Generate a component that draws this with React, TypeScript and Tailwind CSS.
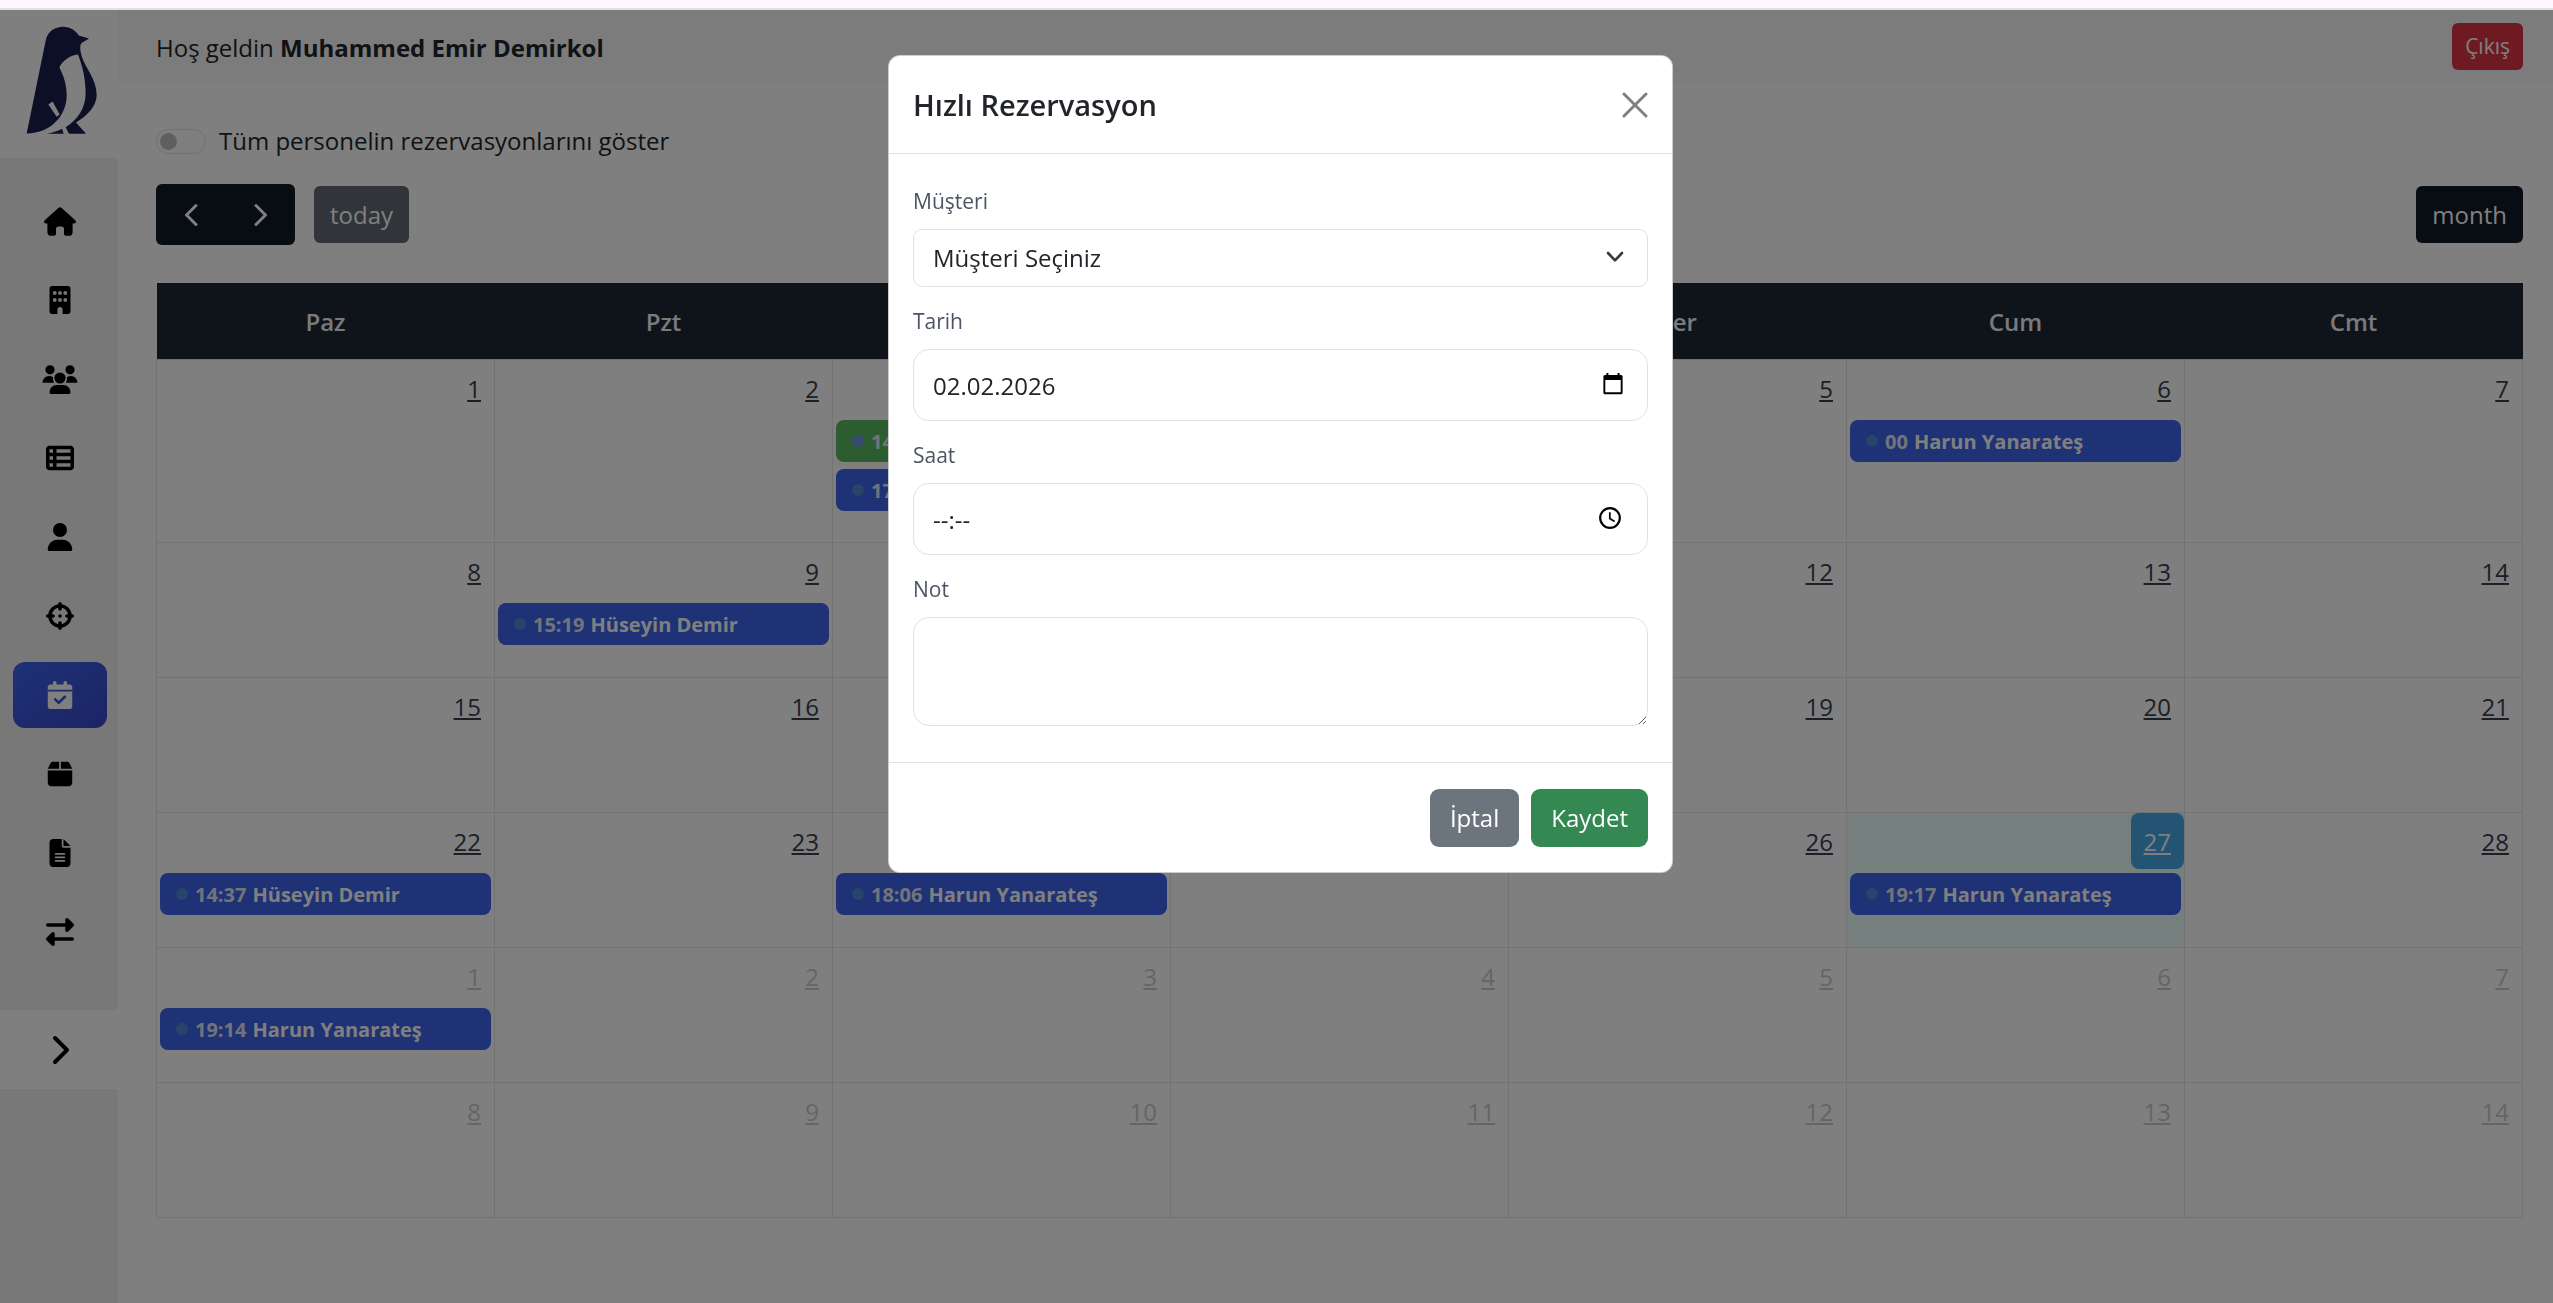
import { useState } from "react";
import type { ReactNode } from "react";
import clsx from "clsx";
import {
  FaBox,
  FaBuilding,
  FaCalendarCheck,
  FaChevronRight,
  FaCrosshairs,
  FaFileLines,
  FaRightLeft,
  FaTableList,
  FaUser,
} from "react-icons/fa6";

type CalendarEvent = {
  time: string;
  title: string;
  color?: "blue" | "green";
};

type Day = {
  day: number;
  other?: boolean;
  today?: boolean;
  events?: CalendarEvent[];
};

const weekDays = ["Paz", "Pzt", "Sal", "Çar", "Per", "Cum", "Cmt"];

const events: Record<string, CalendarEvent[]> = {
  "0-2": [
    { time: "14:30", title: "Hüseyin Demir", color: "green" },
    { time: "17:00", title: "Harun Yanarateş" },
  ],
  "0-5": [{ time: "00", title: "Harun Yanarateş" }],
  "1-1": [{ time: "15:19", title: "Hüseyin Demir" }],
  "3-0": [{ time: "14:37", title: "Hüseyin Demir" }],
  "3-2": [{ time: "18:06", title: "Harun Yanarateş" }],
  "3-5": [{ time: "19:17", title: "Harun Yanarateş" }],
  "4-0": [{ time: "19:14", title: "Harun Yanarateş" }],
};

const weeks: Day[][] = Array.from({ length: 6 }, (_, w) =>
  Array.from({ length: 7 }, (_, d) => {
    const n = w * 7 + d + 1;
    return {
      day: n > 28 ? n - 28 : n,
      other: n > 28,
      today: n === 27,
      events: events[`${w}-${d}`],
    };
  })
);

function Penguin() {
  return (
    <svg viewBox="78 84 216 326" className="h-[109px] w-[72px]" aria-hidden="true">
      <path
        fill="#1a1f4f"
        d="M80 406 L137 128 C142 100 164 86 189 86 C211 86 227 97 236 112 L267 121 L246 134 C239 140 240 152 243 165 C252 208 291 240 290 292 C289 325 262 352 228 373 L258 407 H207 L197 387 C232 365 257 330 257 285 C257 243 248 205 234 169 C210 172 190 185 178 207 C191 232 200 260 200 292 C200 350 155 405 80 406 Z"
      />
      <path fill="#1a1f4f" d="M141 407 C160 403 175 398 186 392 L191 407 Z" />
      <path fill="#ffffff" d="M145 319 L158 310 L179 349 L170 356 Z" />
    </svg>
  );
}

function HomeIcon() {
  return (
    <svg viewBox="0 0 32 29" className="h-[29px] w-8" fill="currentColor" aria-hidden="true">
      <path d="M14.6 .8 C15.4 0 16.6 0 17.4 .8 L31.3 13.2 C32.6 14.5 31.8 16.4 30.2 16.4 H28.6 V25.4 C28.6 27.4 27.1 28.8 25.1 28.8 H22 C20.9 28.8 20 28 20 26.8 V21.8 C20 20.4 18.9 19.4 17.6 19.4 H14.4 C13.1 19.4 12 20.4 12 21.8 V26.8 C12 28 11.1 28.8 10 28.8 H6.9 C4.9 28.8 3.4 27.4 3.4 25.4 V16.4 H1.8 C.2 16.4 -.6 14.5 .7 13.2 Z" />
    </svg>
  );
}

function UsersIcon() {
  return (
    <svg viewBox="0 0 36 29" className="h-[29px] w-9" fill="currentColor" aria-hidden="true">
      <circle cx="8" cy="4.8" r="4.6" />
      <circle cx="28" cy="4.8" r="4.6" />
      <path d="M.6 17.8 C.6 13.8 3.5 11 7.2 11 C8.6 11 10 11.4 11.1 12.2 C10.8 14.2 11.2 16.2 12.2 17.8 Z" />
      <path d="M35.4 17.8 C35.4 13.8 32.5 11 28.8 11 C27.4 11 26 11.4 24.9 12.2 C25.2 14.2 24.8 16.2 23.8 17.8 Z" />
      <circle cx="18" cy="13" r="5.6" />
      <path d="M7.5 27.6 C7.5 23.2 10.6 20 14.8 20 H21.2 C25.4 20 28.5 23.2 28.5 27.6 C28.5 28.4 28 29 27.2 29 H8.8 C8 29 7.5 28.4 7.5 27.6 Z" />
    </svg>
  );
}

function Chevron({ flip }: { flip?: boolean }) {
  return (
    <svg
      viewBox="0 0 14 24"
      className="h-6 w-[14px]"
      fill="none"
      stroke="currentColor"
      strokeWidth="3"
      strokeLinecap="round"
      strokeLinejoin="round"
      aria-hidden="true"
    >
      <path d={flip ? "M2 2.5 L11.5 12 L2 21.5" : "M12 2.5 L2.5 12 L12 21.5"} />
    </svg>
  );
}

const navItems: { label: string; icon: ReactNode; active?: boolean }[] = [
  { label: "Ana Sayfa", icon: <HomeIcon /> },
  { label: "Şirket", icon: <FaBuilding /> },
  { label: "Müşteriler", icon: <UsersIcon /> },
  { label: "Liste", icon: <FaTableList /> },
  { label: "Personel", icon: <FaUser /> },
  { label: "Hedefler", icon: <FaCrosshairs /> },
  { label: "Rezervasyonlar", icon: <FaCalendarCheck />, active: true },
  { label: "Ürünler", icon: <FaBox /> },
  { label: "Raporlar", icon: <FaFileLines /> },
  { label: "Transferler", icon: <FaRightLeft /> },
];

function Sidebar() {
  return (
    <aside className="flex w-[118px] shrink-0 flex-col bg-[#f1f1f1]">
      <a href="#" aria-label="Logo" className="flex h-[148px] items-center justify-center bg-white pb-2 pl-[6px]">
        <Penguin />
      </a>
      <nav className="pt-[30px] pr-[11px] pb-[45px] pl-[13px]">
        <ul className="flex flex-col gap-[13px]">
          {navItems.map((item) => (
            <li key={item.label}>
              <a
                href="#"
                aria-label={item.label}
                className={clsx(
                  "flex h-[66px] items-center justify-center rounded-xl text-[28px]",
                  item.active
                    ? "bg-linear-to-br from-[#3b65ea] to-[#3848cc] text-white"
                    : "text-black"
                )}
              >
                {item.icon}
              </a>
            </li>
          ))}
        </ul>
      </nav>
      <button
        type="button"
        aria-label="Menüyü aç"
        className="flex h-[79px] items-center justify-center bg-white text-[32px] text-black"
      >
        <FaChevronRight />
      </button>
    </aside>
  );
}

function Header() {
  return (
    <header className="flex h-[73px] items-center justify-between bg-[#f8f8f8] pr-[30px] pl-[38px]">
      <p className="pt-[2px]">
        Hoş geldin <strong className="font-bold">Muhammed Emir Demirkol</strong>
      </p>
      <button type="button" className="h-[47px] rounded-md bg-[#dc3545] px-[13px] text-[21px] text-white">
        Çıkış
      </button>
    </header>
  );
}

function EventPill({ event }: { event: CalendarEvent }) {
  return (
    <a
      href="#"
      className={clsx(
        "flex h-[42px] items-center overflow-hidden rounded-lg pl-4 text-[20px] font-bold whitespace-nowrap text-white",
        event.color === "green" ? "bg-[#5cb862]" : "bg-[#3c64ea]"
      )}
    >
      <span
        className={clsx(
          "mr-[7px] size-3 shrink-0 rounded-full",
          event.color === "green" ? "bg-[#6a94dc]" : "bg-[#4c88d8]"
        )}
      />
      <span className="mr-[6px] pt-[2px] text-[#e4e8f8]">{event.time}</span>
      <span className="pt-[2px]">{event.title}</span>
    </a>
  );
}

function DayCell({ day }: { day: Day }) {
  return (
    <td
      className={clsx(
        "h-[135px] border border-[#e6e6e6] p-0 align-top",
        day.today && "bg-[#ebfefa]"
      )}
    >
      <div className="flex h-[60px] items-start justify-end">
        <a
          href="#"
          className={clsx(
            "rounded-lg px-[13px] pt-[11px] pb-[9px] leading-9 font-medium underline decoration-2 underline-offset-2",
            day.today && "bg-[#48a8e8] text-white",
            day.other ? "text-[#c9cacc]" : !day.today && "text-[#374151]"
          )}
        >
          {day.day}
        </a>
      </div>
      {day.events && (
        <div className="flex flex-col gap-[7px] px-[3px] pb-[31px]">
          {day.events.map((event) => (
            <EventPill key={event.time} event={event} />
          ))}
        </div>
      )}
    </td>
  );
}

function Calendar() {
  return (
    <table className="mt-[38px] w-full table-fixed border-collapse">
      <thead>
        <tr>
          {weekDays.map((name) => (
            <th key={name} className="h-[76px] bg-[#1f2937] pt-[2px] font-semibold text-[#f3f4f6]">
              {name}
            </th>
          ))}
        </tr>
      </thead>
      <tbody>
        {weeks.map((week, i) => (
          <tr key={i}>
            {week.map((day) => (
              <DayCell key={day.day} day={day} />
            ))}
          </tr>
        ))}
      </tbody>
    </table>
  );
}

const fieldClass =
  "w-full rounded-2xl border border-[#dee2e6] bg-white px-[19px] text-[#212529] focus:outline-none";
const labelClass = "mb-3 block text-[21px] leading-8 text-[#4b5563]";

function ReservationModal({ onClose }: { onClose: () => void }) {
  const [date, setDate] = useState("02.02.2026");
  const [time, setTime] = useState("--:--");

  return (
    <div
      role="dialog"
      aria-modal="true"
      aria-labelledby="modal-title"
      className="w-[785px] rounded-xl border border-black/20 bg-white text-[#212529]"
    >
      <div className="flex h-[98px] items-center justify-between border-b border-[#dee2e6] px-6">
        <h5 id="modal-title" className="text-[29px] font-semibold">
          Hızlı Rezervasyon
        </h5>
        <button type="button" aria-label="Kapat" onClick={onClose} className="text-[#808080]">
          <svg viewBox="0 0 26 26" className="size-[26px]" stroke="currentColor" strokeWidth="3" strokeLinecap="round">
            <path d="M2 2 L24 24 M24 2 L2 24" />
          </svg>
        </button>
      </div>

      <div className="flex flex-col gap-[18px] px-6 pt-[31px] pb-9">
        <div>
          <label htmlFor="musteri" className={labelClass}>
            Müşteri
          </label>
          <div className="relative">
            <select
              id="musteri"
              className="h-[58px] w-full appearance-none rounded-[9px] border border-[#dee2e6] bg-white px-[19px] text-[#212529] focus:outline-none"
            >
              <option>Müşteri Seçiniz</option>
            </select>
            <svg
              viewBox="0 0 18 12"
              className="pointer-events-none absolute top-[22px] right-6 h-3 w-[18px]"
              fill="none"
              stroke="#343a40"
              strokeWidth="2.6"
              strokeLinecap="round"
              strokeLinejoin="round"
            >
              <path d="M2 2 L9 9.4 L16 2" />
            </svg>
          </div>
        </div>

        <div>
          <label htmlFor="tarih" className={labelClass}>
            Tarih
          </label>
          <div className="relative">
            <input
              id="tarih"
              type="text"
              value={date}
              onChange={(e) => setDate(e.target.value)}
              className={clsx(fieldClass, "h-[72px]")}
            />
            <svg viewBox="0 0 20 22" className="pointer-events-none absolute top-6 right-[25px] h-[22px] w-5">
              <path d="M3.4 0 H5.4 V3 H3.4 Z M14.6 0 H16.6 V3 H14.6 Z" />
              <path
                fillRule="evenodd"
                d="M2 2 H18 C19.1 2 19.6 2.9 19.6 4 V19.4 C19.6 20.5 19 21.2 18 21.2 H2 C1 21.2 .4 20.5 .4 19.4 V4 C.4 2.9 .9 2 2 2 Z M2.3 7 V19.3 H17.7 V7 Z"
              />
            </svg>
          </div>
        </div>

        <div>
          <label htmlFor="saat" className={labelClass}>
            Saat
          </label>
          <div className="relative">
            <input
              id="saat"
              type="text"
              value={time}
              onChange={(e) => setTime(e.target.value)}
              className={clsx(fieldClass, "h-[72px]")}
            />
            <svg
              viewBox="0 0 24 24"
              className="pointer-events-none absolute top-[23px] right-[26px] size-6"
              fill="none"
              stroke="#000000"
            >
              <circle cx="12" cy="12" r="9.8" strokeWidth="2.2" />
              <path d="M11.8 6.2 V12.6 L16.6 15.4" strokeWidth="1.7" />
            </svg>
          </div>
        </div>

        <div>
          <label htmlFor="not" className={labelClass}>
            Not
          </label>
          <textarea id="not" className={clsx(fieldClass, "block h-[109px] resize-y py-3")} />
        </div>
      </div>

      <div className="flex h-[110px] items-center justify-end gap-3 border-t border-[#dee2e6] px-6">
        <button
          type="button"
          onClick={onClose}
          className="h-[58px] rounded-[9px] bg-[#6c757d] px-5 text-white"
        >
          İptal
        </button>
        <button type="button" className="h-[58px] rounded-[9px] bg-[#348852] px-5 text-white">
          Kaydet
        </button>
      </div>
    </div>
  );
}

export default function App() {
  const [open, setOpen] = useState(true);

  return (
    <div className="flex min-h-screen flex-col bg-white font-['Open_Sans','Noto_Sans',sans-serif] text-[24px] text-[#212529]">
      <div className="h-[10px] border-b-2 border-[#e4e0ea] bg-[#fdf7ff]" />
      <div className="flex flex-1">
        <Sidebar />
        <div className="flex min-w-0 flex-1 flex-col">
          <Header />
          <main className="pt-10 pr-[30px] pl-[38px]">
            <div className="flex h-9 items-center gap-[13px]">
              <input
                id="all-staff"
                type="checkbox"
                role="switch"
                className="h-[25px] w-[50px] appearance-none rounded-full border border-[#dee2e6] bg-white before:mt-[3px] before:ml-[3px] before:block before:size-[17px] before:rounded-full before:bg-[#bfbfbf]"
              />
              <label htmlFor="all-staff">Tüm personelin rezervasyonlarını göster</label>
            </div>

            <div className="mt-[25px] flex items-center justify-between">
              <div className="flex items-center gap-[19px]">
                <div className="flex h-[61px] overflow-hidden rounded-md bg-[#111827] text-white">
                  <button type="button" aria-label="Önceki" className="flex w-[70px] items-center justify-center">
                    <Chevron />
                  </button>
                  <button type="button" aria-label="Sonraki" className="flex w-[69px] items-center justify-center">
                    <Chevron flip />
                  </button>
                </div>
                <button
                  type="button"
                  disabled
                  className="h-[57px] rounded-md bg-[#111827] px-4 text-white opacity-65"
                >
                  today
                </button>
              </div>
              <button type="button" className="h-[57px] rounded-md bg-[#111827] px-4 text-white">
                month
              </button>
            </div>

            <Calendar />
          </main>
        </div>
      </div>

      {open && (
        <div className="fixed inset-x-0 top-[10px] bottom-0 flex items-start justify-center bg-black/50 pt-[45px] pl-2">
          <ReservationModal onClose={() => setOpen(false)} />
        </div>
      )}
    </div>
  );
}
